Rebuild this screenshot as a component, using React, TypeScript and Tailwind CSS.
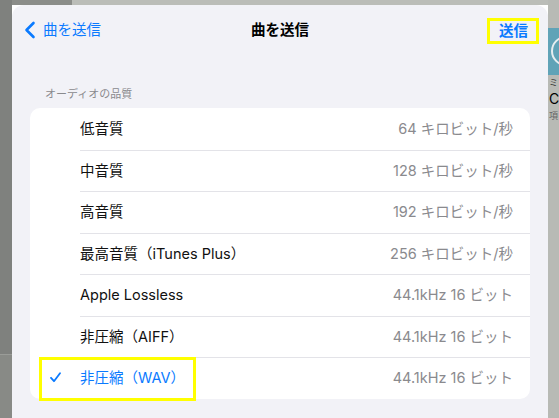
import React from "react";

const rows = [
  { label: "低音質", value: "64 キロビット/秒" },
  { label: "中音質", value: "128 キロビット/秒" },
  { label: "高音質", value: "192 キロビット/秒" },
  { label: "最高音質（iTunes Plus）", value: "256 キロビット/秒" },
  { label: "Apple Lossless", value: "44.1kHz 16 ビット" },
  { label: "非圧縮（AIFF）", value: "44.1kHz 16 ビット" },
  { label: "非圧縮（WAV）", value: "44.1kHz 16 ビット", selected: true },
];

export default function App() {
  return (
    <div className="w-[559px] h-[418px] overflow-hidden flex font-['Inter','Noto_Sans_CJK_JP',sans-serif] text-black">
      {/* left backdrop */}
      <div className="w-[12px] h-full flex flex-col bg-[#7f817e]">
        <div className="h-[355px] border-b border-[#9a9c98]" />
        <div className="flex-1 bg-[#888a86]" />
      </div>

      {/* middle column */}
      <div className="w-[536px] h-full flex flex-col">
        <div className="h-[5px] flex shrink-0">
          <div className="w-[60px] bg-[#8b8d89]" />
          <div className="flex-1 bg-[#bbbdb8]" />
        </div>

        {/* sheet */}
        <div className="flex-1 bg-[#f2f2f7] rounded-t-[12px] flex flex-col relative">
          <div className="h-[50px] flex items-center relative px-[12px]">
            <div className="flex items-center gap-[7px] text-[#0a7aff]">
              <svg width="12" height="18" viewBox="0 0 12 18">
                <polyline points="9.5,2 2.5,9 9.5,16" fill="none" stroke="#0a7aff" strokeWidth="2.6" strokeLinecap="round" strokeLinejoin="round" />
              </svg>
              <span className="text-[14.5px]">曲を送信</span>
            </div>
            <div className="absolute left-0 right-0 text-center text-[14.5px] font-semibold pointer-events-none">曲を送信</div>
            <div className="ml-auto pr-[8px] text-[14.5px] leading-[21px] font-semibold text-[#0a7aff] relative">
              送信
              <div className="absolute left-[-12px] right-[-3px] top-[-2px] bottom-[-3px] border-[3px] border-[#ffff00]" />
            </div>
          </div>

          <div className="mt-[32px] pl-[33px] text-[11px] leading-[14px] text-[#8a8a8e]">オーディオの品質</div>

          <div className="mt-[7px] mx-[18px] bg-white rounded-[10px] overflow-hidden">
            {rows.map((r, i) => (
              <div key={i} className="h-[41.5px] flex items-center">
                <div className="w-[50px] h-full flex items-center pl-[20px]">
                  {r.selected && (
                    <svg width="11" height="11" viewBox="0 0 11 11">
                      <polyline points="1,5.8 4,9.2 10,1.3" fill="none" stroke="#0a7aff" strokeWidth="1.8" strokeLinecap="round" strokeLinejoin="round" />
                    </svg>
                  )}
                </div>
                <div className={`flex-1 h-full flex items-center pr-[17px] ${i > 0 ? "border-t border-[#e3e3e8]" : ""}`}>
                  <span className={`text-[14.5px] ${r.selected ? "text-[#0a7aff]" : "text-[#111]"}`}>{r.label}</span>
                  <span className="ml-auto text-[14.5px] text-[#8a8a8e]">{r.value}</span>
                </div>
              </div>
            ))}
          </div>

          {/* highlight on selected row */}
          <div className="absolute left-[27px] top-[352px] w-[157px] h-[44px] border-[3px] border-[#ffff00]" />
        </div>
      </div>

      {/* right backdrop */}
      <div className="flex-1 h-full flex flex-col bg-[#b8bab5] overflow-hidden">
        <div className="h-[28px]" />
        <div className="h-[47px] bg-[#60a3b7] relative">
          <div className="absolute left-[3px] top-[8px] w-[30px] h-[30px] rounded-full border-2 border-[#e6eef0]" />
        </div>
        <div className="pl-[1px] pt-[3px] flex flex-col leading-none whitespace-nowrap">
          <span className="text-[9px] text-[#333]">ミ</span>
          <span className="text-[14px] mt-[5px] text-black">C</span>
          <span className="text-[9px] mt-[5px] text-[#666]">項</span>
        </div>
      </div>
    </div>
  );
}
